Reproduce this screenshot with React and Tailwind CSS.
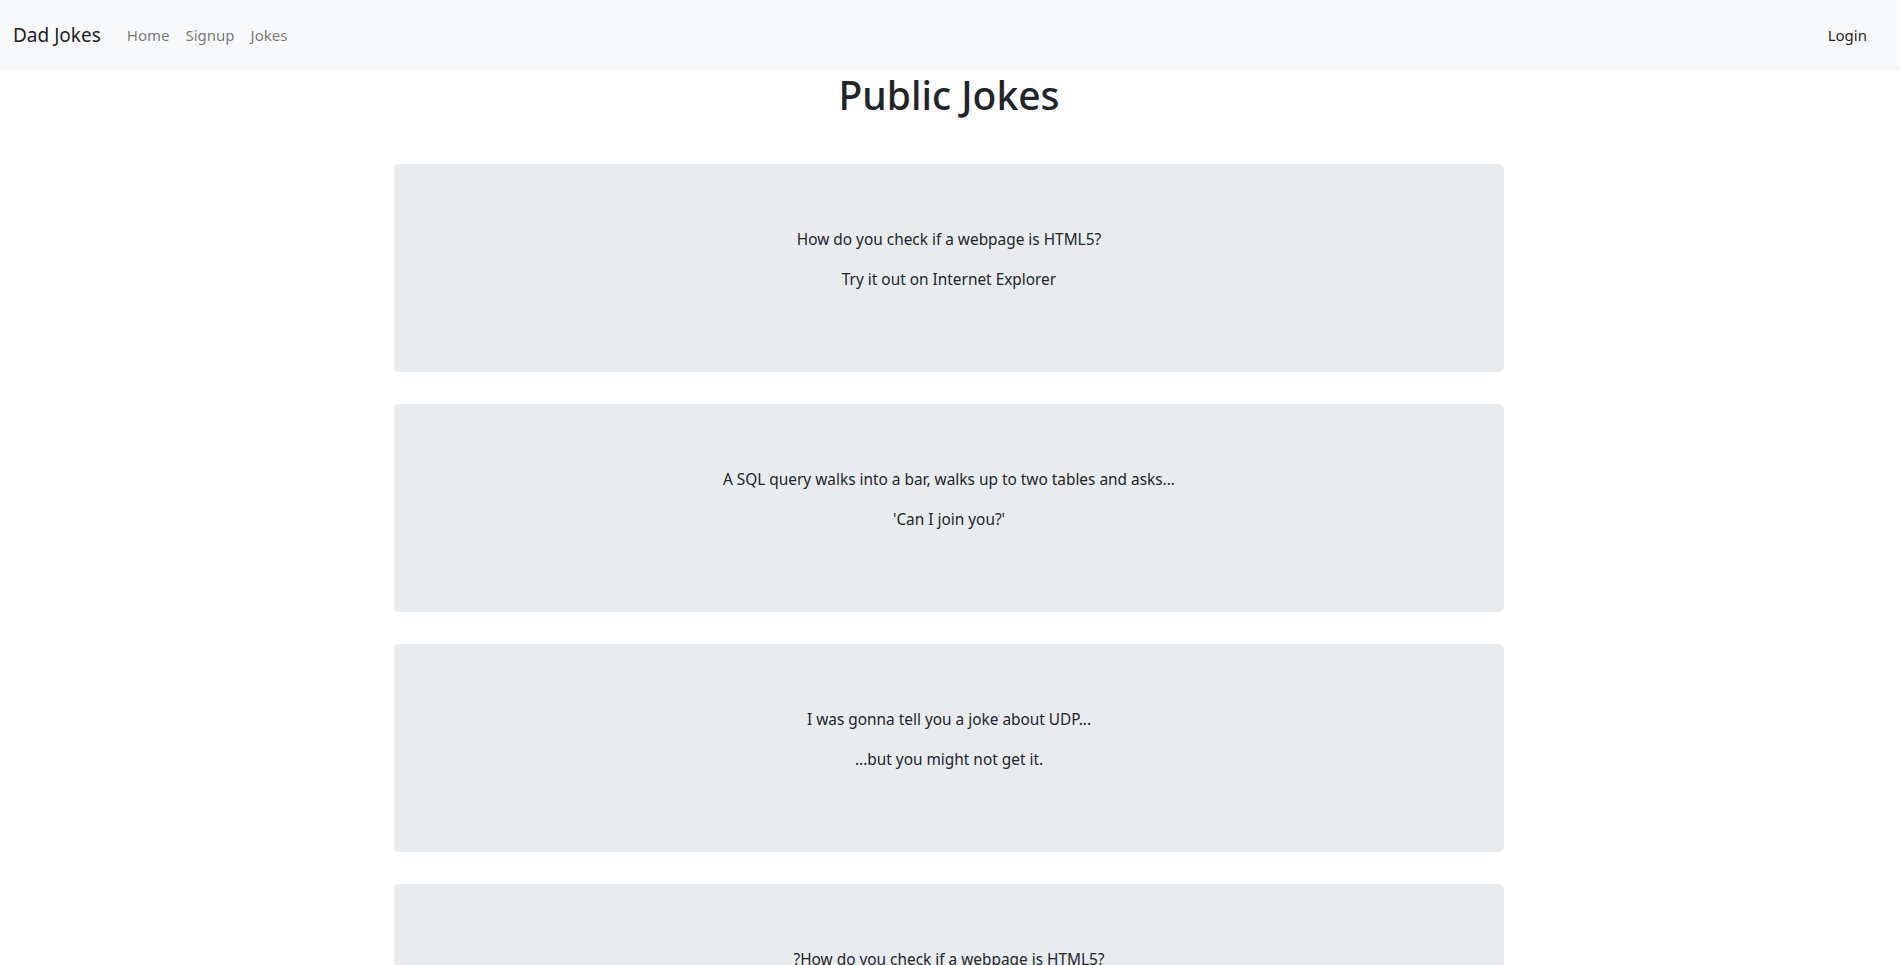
import React from "react";

const jokes = [
  { setup: "How do you check if a webpage is HTML5?", punchline: "Try it out on Internet Explorer" },
  { setup: "A SQL query walks into a bar, walks up to two tables and asks...", punchline: "'Can I join you?'" },
  { setup: "I was gonna tell you a joke about UDP...", punchline: "...but you might not get it." },
  { setup: "?How do you check if a webpage is HTML5?", punchline: "Try it out on Internet Explorer" },
];

const App = () => {
  return (
    <div className="min-h-screen bg-white text-[#212529] font-['Noto_Sans','Open_Sans',sans-serif]">
      {/* Navbar */}
      <nav className="h-[70px] bg-[#f8f9fa] flex items-center justify-between pl-[13px] pr-[33px]">
        <div className="flex items-center">
          <a className="text-[19px] text-black/90 mr-[26px]">Dad Jokes</a>
          <div className="flex items-center gap-[16px] text-[15px] text-black/55">
            <a>Home</a>
            <a>Signup</a>
            <a>Jokes</a>
          </div>
        </div>
        <a className="text-[15px] text-black/90">Login</a>
      </nav>

      {/* Content */}
      <div className="w-[1110px] mx-auto -translate-x-px">
        <h1 className="text-[39px] font-medium leading-[48px] text-center mt-px mb-[45px]">Public Jokes</h1>
        <div className="flex flex-col gap-[32px]">
          {jokes.map((joke, i) => (
            <div key={i} className="bg-[#e9ecef] rounded-[5px] px-8 pt-16 pb-16 text-center text-[15.4px]">
              <p className="leading-[24px] mb-4">{joke.setup}</p>
              <p className="leading-[24px] mb-4">{joke.punchline}</p>
            </div>
          ))}
        </div>
      </div>
    </div>
  );
};

export default App;
